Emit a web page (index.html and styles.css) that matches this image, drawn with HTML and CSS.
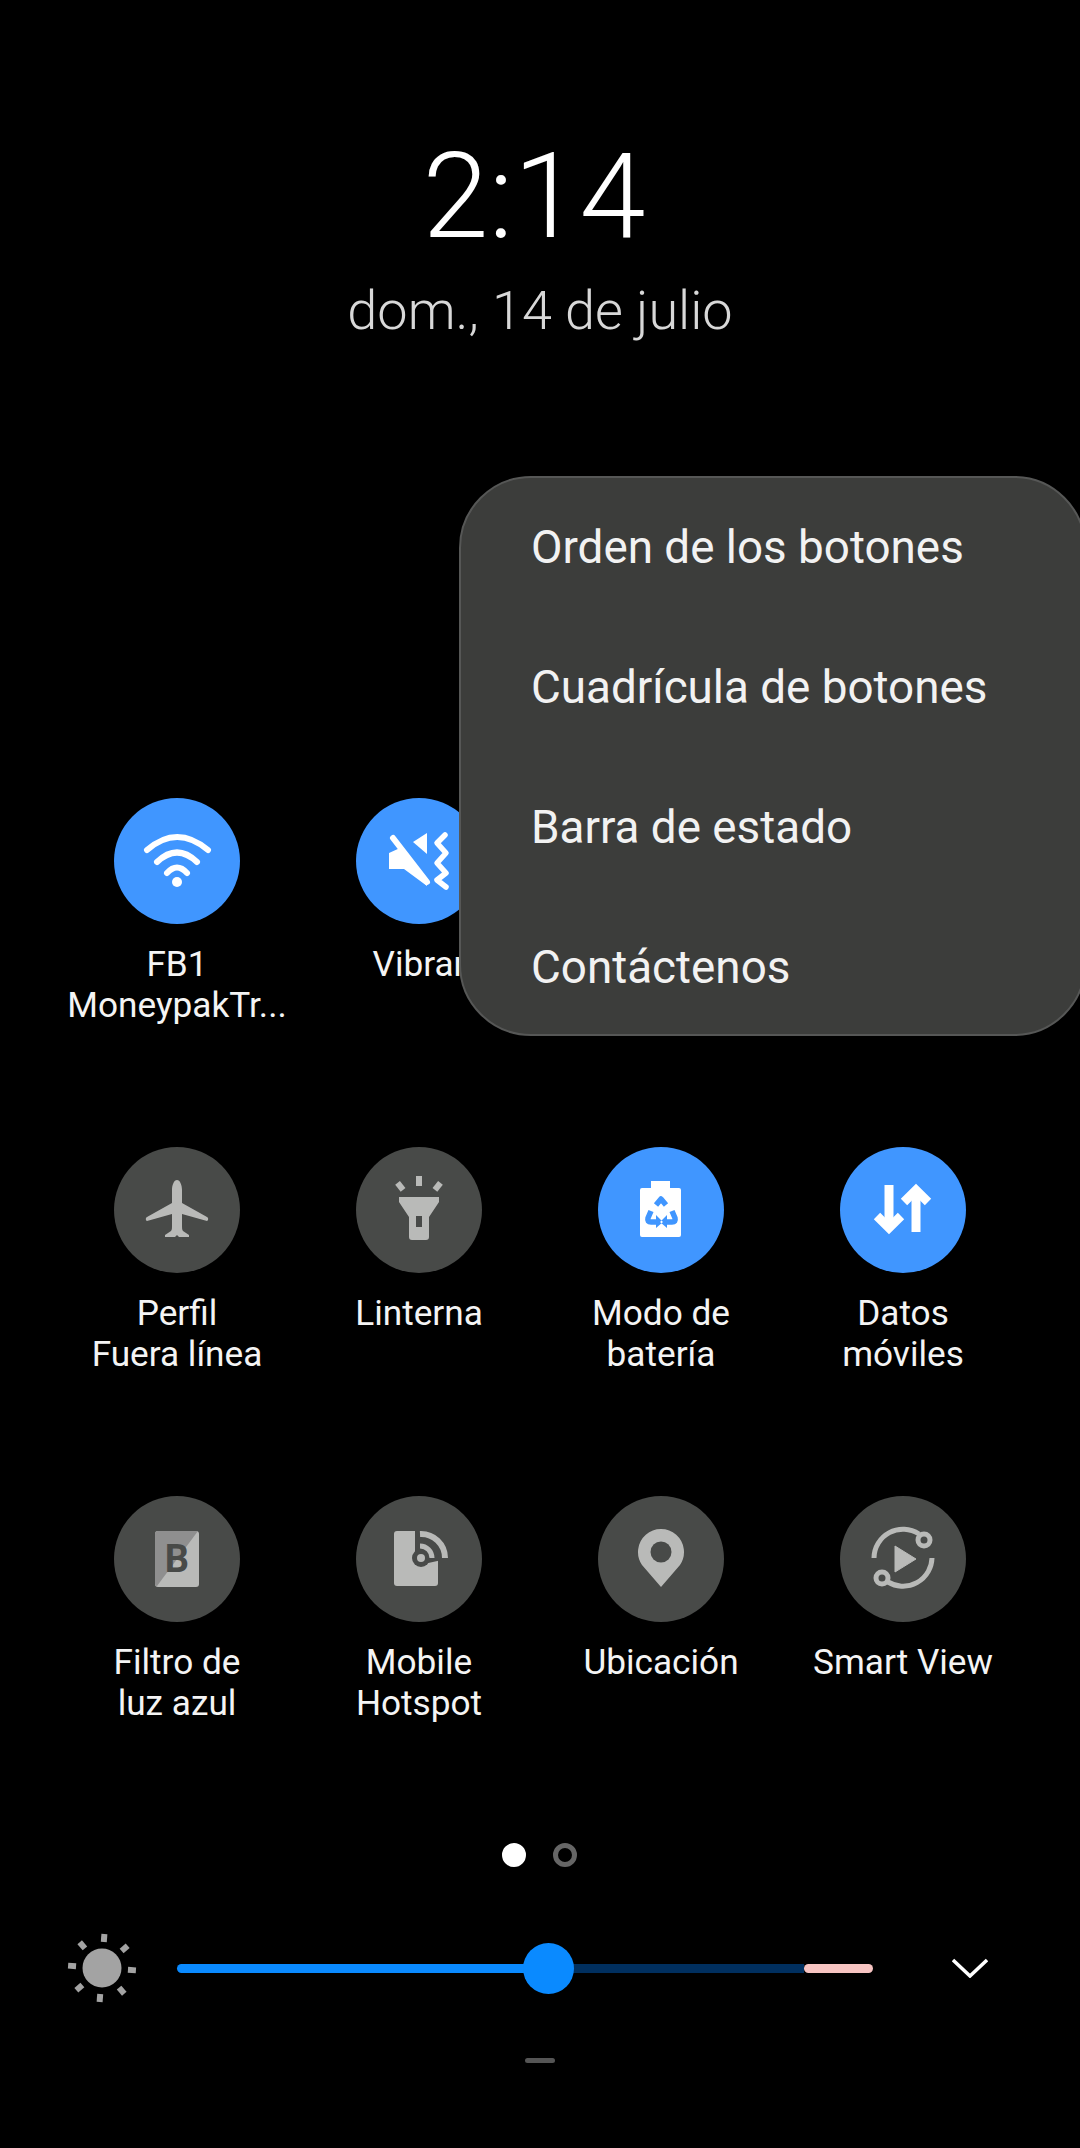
FILE: index.html
```html
<!DOCTYPE html>
<html lang="es">
<head>
    <meta charset="UTF-8">
    <meta name="viewport" content="width=device-width, initial-scale=1.0">
    <title>Panel rapido</title>
    <link rel="stylesheet" href="styles.css">
</head>
<body>
    <div class="clock">
        <div class="time">2:14</div>
        <div class="date">dom., 14 de julio</div>
    </div>

    <div class="tiles">
        <div class="tile">
            <div class="circle on">
                <svg viewBox="0 0 126 126">
                    <g fill="none" stroke="#fff" stroke-width="6" stroke-linecap="round">
                        <path d="M33 52 Q63 26 94 52"/>
                        <path d="M43 64 Q63 45 83 64"/>
                        <path d="M53 75 Q63 64 73 75"/>
                    </g>
                    <circle cx="63" cy="84" r="5" fill="#fff"/>
                </svg>
            </div>
            <div class="label">FB1<br>MoneypakTr...</div>
        </div>
        <div class="tile">
            <div class="circle on">
                <svg viewBox="0 0 126 126">
                    <path d="M33 55 L44 50 L71 80 V88 L48 71 H33 Z" fill="#fff"/>
                    <path d="M57 44 L71 35 V56 Z" fill="#fff"/>
                    <path d="M37 40 L71 84" stroke="#fff" stroke-width="6" stroke-linecap="round"/>
                    <path d="M89 37 L81 45 L90 55 L81 65 L90 75 L81 82 L90 89" fill="none" stroke="#fff" stroke-width="5.5" stroke-linecap="round" stroke-linejoin="round"/>
                </svg>
            </div>
            <div class="label">Vibrar</div>
        </div>
        <div class="tile"></div>
        <div class="tile"></div>

        <div class="tile">
            <div class="circle">
                <svg viewBox="0 0 126 126">
                    <path d="M63 33 C66 33 68 38 68 43 V56 L93 70 C95 71 94 74 93 74 L68 67 V78 C68 81 68 83 69 84 L75 88 V90 H65 L63 88 L61 90 H51 V88 L57 84 C58 83 58 81 58 78 V67 L33 74 C32 74 31 71 33 70 L58 56 V43 C58 38 60 33 63 33 Z" fill="#b9bab8"/>
                </svg>
            </div>
            <div class="label">Perfil<br>Fuera línea</div>
        </div>
        <div class="tile">
            <div class="circle">
                <svg viewBox="0 0 126 126">
                    <g fill="#b9bab8">
                        <rect x="60" y="29" width="6" height="10"/>
                        <rect x="41" y="35" width="6" height="9" transform="rotate(-38 44 39)"/>
                        <rect x="79" y="35" width="6" height="9" transform="rotate(38 82 39)"/>
                        <path d="M43 50 H83 V55 L73 70 V90 Q73 93 70 93 H56 Q53 93 53 90 V70 L43 55 Z"/>
                    </g>
                    <rect x="60" y="69" width="6" height="11" fill="#484a48"/>
                </svg>
            </div>
            <div class="label">Linterna</div>
        </div>
        <div class="tile">
            <div class="circle on">
                <svg viewBox="0 0 126 126">
                    <path d="M53 34 H72 V41 H81 Q83 41 83 43 V88 Q83 90 81 90 H44 Q42 90 42 88 V43 Q42 41 44 41 H53 Z" fill="#fff"/>
                    <g fill="none" stroke="#4096ff" stroke-width="5.5" stroke-linejoin="round">
                        <path d="M58 58 L63 52 L68 58"/>
                        <path d="M53 64 L50 71 Q49 75 53 75 H60"/>
                        <path d="M74 64 L77 71 Q78 75 74 75 H66"/>
                    </g>
                    <path d="M58 68 V81 L65 75 Z M69 68 V81 L62 75 Z" fill="#4096ff"/>
                </svg>
            </div>
            <div class="label">Modo de<br>batería</div>
        </div>
        <div class="tile">
            <div class="circle on">
                <svg viewBox="0 0 126 126">
                    <g fill="none" stroke="#fff" stroke-width="9">
                        <path d="M49 38 V80"/>
                        <path d="M37 69 L49 81 L61 69"/>
                        <path d="M76 43 V85"/>
                        <path d="M64 55 L76 43 L88 55"/>
                    </g>
                </svg>
            </div>
            <div class="label">Datos<br>móviles</div>
        </div>

        <div class="tile">
            <div class="circle">
                <svg viewBox="0 0 126 126">
                    <rect x="41" y="35" width="44" height="56" rx="3" fill="#b9bab8"/>
                    <path d="M44 35 H84 L43 90 Q41 90 41 88 V38 Q41 35 44 35 Z" fill="#8f8f8f"/>
                    <text class="filter-b" x="63" y="76" text-anchor="middle">B</text>
                </svg>
            </div>
            <div class="label">Filtro de<br>luz azul</div>
        </div>
        <div class="tile">
            <div class="circle">
                <svg viewBox="0 0 126 126">
                    <rect x="38" y="35" width="44" height="55" rx="3" fill="#b9bab8"/>
                    <rect x="59" y="30" width="30" height="34" fill="#484a48"/>
                    <path d="M65 66 L83 62" stroke="#484a48" stroke-width="5"/>
                    <circle cx="65" cy="62" r="9" fill="#484a48"/>
                    <circle cx="65" cy="62" r="4" fill="#b9bab8"/>
                    <g fill="none" stroke="#b9bab8" stroke-width="6">
                        <path d="M64 38 A24 24 0 0 1 89 62"/>
                        <path d="M64 50 A12 12 0 0 1 76 62" stroke-width="5"/>
                    </g>
                </svg>
            </div>
            <div class="label">Mobile<br>Hotspot</div>
        </div>
        <div class="tile">
            <div class="circle">
                <svg viewBox="0 0 126 126">
                    <path d="M63 91 L44 69 A23 23 0 1 1 82 69 Z" fill="#b9bab8"/>
                    <circle cx="63" cy="56" r="10.5" fill="#484a48"/>
                </svg>
            </div>
            <div class="label">Ubicación</div>
        </div>
        <div class="tile">
            <div class="circle">
                <svg viewBox="0 0 126 126">
                    <g fill="none" stroke="#b9bab8" stroke-width="5">
                        <path d="M34 62 A29 29 0 0 1 79 38"/>
                        <path d="M92 62 A29 29 0 0 1 48 86"/>
                        <circle cx="84" cy="44" r="6"/>
                        <circle cx="42" cy="82" r="6"/>
                    </g>
                    <path d="M55 50 L76 63 L55 76 Z" fill="#b9bab8" stroke="#b9bab8" stroke-linejoin="round"/>
                </svg>
            </div>
            <div class="label">Smart View</div>
        </div>
    </div>

    <div class="pager">
        <span class="dot current"></span>
        <span class="dot"></span>
    </div>

    <div class="brightness">
        <svg class="sun" viewBox="0 0 70 70">
            <circle cx="35" cy="35" r="19.5" fill="#a3a3a3"/>
            <g fill="#a3a3a3">
                <rect x="32" y="1" width="6" height="8" transform="rotate(4 35 35)"/>
                <rect x="32" y="1" width="6" height="8" transform="rotate(49 35 35)"/>
                <rect x="32" y="1" width="6" height="8" transform="rotate(94 35 35)"/>
                <rect x="32" y="1" width="6" height="8" transform="rotate(139 35 35)"/>
                <rect x="32" y="1" width="6" height="8" transform="rotate(184 35 35)"/>
                <rect x="32" y="1" width="6" height="8" transform="rotate(229 35 35)"/>
                <rect x="32" y="1" width="6" height="8" transform="rotate(274 35 35)"/>
                <rect x="32" y="1" width="6" height="8" transform="rotate(319 35 35)"/>
            </g>
        </svg>
        <div class="track">
            <div class="track-fill"></div>
            <div class="track-rest"></div>
            <div class="track-hot"></div>
            <div class="thumb"></div>
        </div>
        <svg class="chevron" viewBox="0 0 36 20">
            <path d="M1 2 L18 18 L35 2" fill="none" stroke="#fff" stroke-width="3.5"/>
        </svg>
    </div>

    <div class="handle"></div>

    <div class="menu">
        <div class="menu-item">Orden de los botones</div>
        <div class="menu-item">Cuadrícula de botones</div>
        <div class="menu-item">Barra de estado</div>
        <div class="menu-item">Contáctenos</div>
    </div>
</body>
</html>
```

FILE: styles.css
```css
body {
    margin: 0;
    width: 1080px;
    height: 2148px;
    overflow: hidden;
    position: relative;
    background-color: #000;
    color: #f4f4f4;
    font-family: Roboto, "Liberation Sans", sans-serif;
}

.clock {
    padding-top: 122px;
    text-align: center;
    font-weight: 300;
}
.time {
    font-size: 119px;
    line-height: 150px;
    color: #fff;
    margin-right: 12px;
}
.date {
    font-size: 54px;
    line-height: 60px;
    margin-top: 9px;
    color: #d8d8d8;
}

.tiles {
    display: grid;
    grid-template-columns: repeat(4, 242px);
    grid-auto-rows: 349px;
    padding: 0 56px;
    margin-top: 457px;
}
.tile {
    display: flex;
    flex-direction: column;
    align-items: center;
}
.circle {
    width: 126px;
    height: 126px;
    border-radius: 50%;
    background: #484a48;
}
.circle.on {
    background: #4096ff;
}
.circle svg {
    display: block;
    width: 126px;
    height: 126px;
}
.label {
    margin-top: 20px;
    font-size: 35.2px;
    line-height: 41px;
    text-align: center;
    white-space: nowrap;
}
.filter-b {
    font-family: Roboto, sans-serif;
    font-weight: 700;
    font-size: 38px;
    fill: #484a48;
}

.pager {
    display: flex;
    justify-content: center;
    gap: 27px;
    margin-top: -2px;
    padding-right: 1px;
}
.dot {
    width: 14px;
    height: 14px;
    border: 5px solid #666;
    border-radius: 50%;
}
.dot.current {
    background: #fff;
    border-color: #fff;
}

.brightness {
    display: flex;
    align-items: center;
    height: 70px;
    margin-top: 66px;
    padding-left: 67px;
}
.sun {
    width: 70px;
    height: 70px;
}
.track {
    position: relative;
    display: flex;
    width: 696px;
    height: 9px;
    margin-left: 40px;
    border-radius: 5px;
}
.track-fill {
    width: 372px;
    background: #0a8aff;
    border-radius: 5px 0 0 5px;
}
.track-rest {
    width: 255px;
    background: #002f5f;
}
.track-hot {
    width: 69px;
    background: #f7c4c2;
    border-radius: 5px;
}
.thumb {
    position: absolute;
    left: 346px;
    top: -21px;
    width: 51px;
    height: 51px;
    border-radius: 50%;
    background: #0a8aff;
}
.chevron {
    width: 36px;
    height: 20px;
    margin-left: 79px;
}

.handle {
    width: 30px;
    height: 5px;
    margin: 55px auto 0;
    border-radius: 3px;
    background: #555;
}

/* sits over the first tile row */
.menu {
    position: absolute;
    top: 476px;
    left: 459px;
    width: 623px;
    height: 556px;
    border: 2px solid #565756;
    border-radius: 72px;
    background: #3c3d3b;
    display: flex;
    flex-direction: column;
}
.menu-item {
    flex: none;
    height: 140px;
    line-height: 140px;
    padding-left: 70px;
    font-size: 45.8px;
    color: #f2f2f2;
}
```
